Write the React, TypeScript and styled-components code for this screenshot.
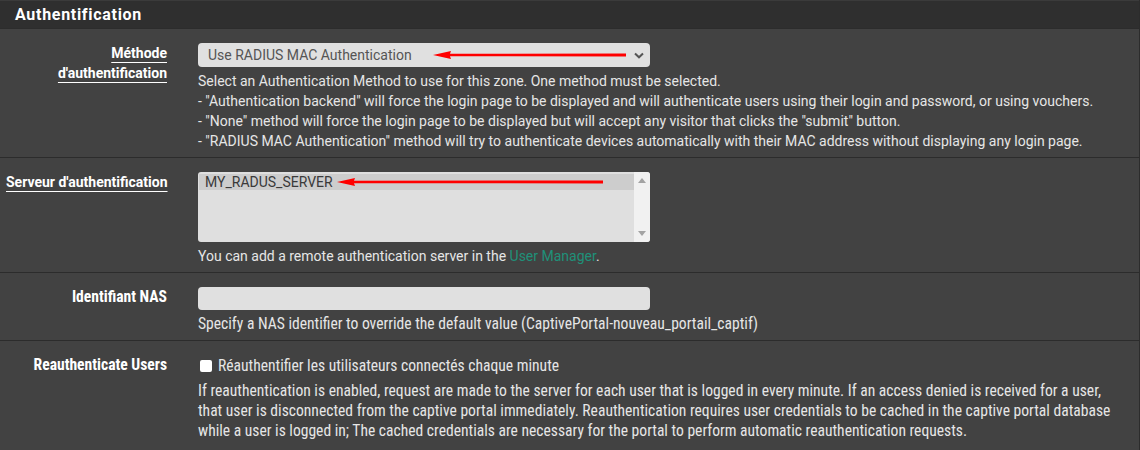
import React from 'react';
import styled, { createGlobalStyle } from 'styled-components';

const GlobalStyle = createGlobalStyle`
  html, body {
    margin: 0;
    padding: 0;
    background: #424242;
  }
  body {
    font-family: Roboto, "Liberation Sans", Arial, sans-serif;
    font-size: 14px;
    color: #e6e6e6;
  }
`;

const condensedFont = `"Roboto Condensed", "Liberation Sans Narrow", "DejaVu Sans Condensed", Roboto, sans-serif`;

const Panel = styled.div`
  width: 1139px;
  height: 450px;
  overflow: hidden;
  background: #424242;
  border-right: 1px solid #2c2c2c;
`;

const PanelHeading = styled.div`
  height: 28px;
  box-sizing: border-box;
  background: #2f2f2f;
  border-top: 1px solid #3b3b3b;
  display: flex;
  align-items: center;
  padding-left: 15px;
`;

const PanelTitle = styled.h2`
  margin: 0;
  font-size: 16px;
  font-weight: 700;
  letter-spacing: 0.7px;
  color: #ffffff;
`;

const Row = styled.div<{ condensed?: boolean }>`
  display: grid;
  grid-template-columns: 182px 1fr;
  border-top: 1px solid #2c2c2c;
  font-family: ${(p) => (p.condensed ? condensedFont : 'inherit')};
  font-stretch: ${(p) => (p.condensed ? 'condensed' : 'normal')};
  font-size: ${(p) => (p.condensed ? '15.6px' : '14px')};
`;

const Label = styled.div<{ left?: boolean }>`
  padding: 14px ${(p) => (p.left ? '0' : '15px')} 0 ${(p) => (p.left ? '6px' : '0')};
  text-align: ${(p) => (p.left ? 'left' : 'right')};
  font-weight: 700;
  line-height: 20px;
  color: #ffffff;
`;

const Required = styled.span`
  text-decoration: underline;
  text-decoration-thickness: 1px;
  text-underline-offset: 4px;
`;

const Value = styled.div`
  padding: 14px 15px 6px 16px;
  line-height: 20px;
`;

const Annotated = styled.div`
  position: relative;
  width: 452px;
`;

const SelectBox = styled.div`
  height: 24px;
  box-sizing: border-box;
  background: #e0e0e0;
  border-radius: 4px;
  display: flex;
  align-items: center;
  justify-content: space-between;
  padding: 0 6px 0 10px;
  color: #555555;
  font-size: 14px;
`;

const ListBox = styled.div`
  height: 70px;
  box-sizing: border-box;
  background: #dfdfdf;
  border-radius: 3px;
  display: flex;
  padding: 2px 2px 2px 1px;
`;

const Options = styled.div`
  flex: 1;
`;

const Option = styled.div<{ selected?: boolean }>`
  height: 16px;
  line-height: 16px;
  padding-left: 6px;
  color: #3a3a3a;
  background: ${(p) => (p.selected ? '#cdcdcd' : 'transparent')};
`;

const ScrollTrack = styled.div`
  width: 16px;
  background: #f1f1f1;
  display: flex;
  flex-direction: column;
  justify-content: space-between;
  align-items: center;
  padding: 6px 0;
  margin: -2px -2px -2px 0;
  border-radius: 0 3px 3px 0;
`;

const TextInput = styled.div`
  width: 452px;
  height: 23px;
  background: #e0e0e0;
  border-radius: 4px;
`;

const Help = styled.div<{ gap?: number }>`
  margin-top: ${(p) => p.gap ?? 4}px;
  color: #e6e6e6;
`;

const Line = styled.div`
  white-space: nowrap;
`;

const Link = styled.a`
  color: #1f9079;
  text-decoration: none;
`;

const CheckLine = styled.label`
  display: flex;
  align-items: center;
  gap: 6px;
  height: 20px;
  margin-top: 1px;
  padding-left: 2px;
`;

const CheckBox = styled.span`
  width: 12px;
  height: 12px;
  background: #ffffff;
  border-radius: 2px;
`;

const ArrowMark = styled.svg<{ left: number; top: number }>`
  position: absolute;
  left: ${(p) => p.left}px;
  top: ${(p) => p.top}px;
  pointer-events: none;
`;

const RedArrow: React.FC<{ left: number; top: number; length: number }> = ({ left, top, length }) => (
  <ArrowMark left={left} top={top} width={length} height={10} viewBox={`0 0 ${length} 10`}>
    <polygon points={`0,5 18,1 17,3.8 ${length},3.4 ${length},6.4 17,6.2 18,9`} fill="#ff0000" />
  </ArrowMark>
);

const Chevron = () => (
  <svg width="10" height="7" viewBox="0 0 10 7">
    <path d="M1 1.5 L5 5.3 L9 1.5" fill="none" stroke="#555" strokeWidth="2" />
  </svg>
);

const Tri: React.FC<{ up?: boolean }> = ({ up }) => (
  <svg width="8" height="5" viewBox="0 0 8 5">
    <polygon points={up ? '0,5 4,0 8,5' : '0,0 8,0 4,5'} fill="#a3a3a3" />
  </svg>
);

export default function App() {
  return (
    <>
      <GlobalStyle />
      <Panel>
        <PanelHeading>
          <PanelTitle>Authentification</PanelTitle>
        </PanelHeading>

        <Row>
          <Label>
            <Required>Méthode</Required>
            <br />
            <Required>d'authentification</Required>
          </Label>
          <Value>
            <Annotated>
              <SelectBox>
                <span>Use RADIUS MAC Authentication</span>
                <Chevron />
              </SelectBox>
              <RedArrow left={235} top={7} length={193} />
            </Annotated>
            <Help>
              <Line>Select an Authentication Method to use for this zone. One method must be selected.</Line>
              <Line>- "Authentication backend" will force the login page to be displayed and will authenticate users using their login and password, or using vouchers.</Line>
              <Line>- "None" method will force the login page to be displayed but will accept any visitor that clicks the "submit" button.</Line>
              <Line>- "RADIUS MAC Authentication" method will try to authenticate devices automatically with their MAC address without displaying any login page.</Line>
            </Help>
          </Value>
        </Row>

        <Row>
          <Label left>
            <Required>Serveur d'authentification</Required>
          </Label>
          <Value>
            <Annotated>
              <ListBox>
                <Options>
                  <Option selected>MY_RADUS_SERVER</Option>
                </Options>
                <ScrollTrack>
                  <Tri up />
                  <Tri />
                </ScrollTrack>
              </ListBox>
              <RedArrow left={139} top={5} length={266} />
            </Annotated>
            <Help>
              You can add a remote authentication server in the <Link href="#">User Manager</Link>.
            </Help>
          </Value>
        </Row>

        <Row condensed>
          <Label>Identifiant NAS</Label>
          <Value>
            <TextInput />
            <Help>Specify a NAS identifier to override the default value (CaptivePortal-nouveau_portail_captif)</Help>
          </Value>
        </Row>

        <Row condensed>
          <Label>Reauthenticate Users</Label>
          <Value>
            <CheckLine>
              <CheckBox />
              Réauthentifier les utilisateurs connectés chaque minute
            </CheckLine>
            <Help gap={5}>
              <Line>If reauthentication is enabled, request are made to the server for each user that is logged in every minute. If an access denied is received for a user,</Line>
              <Line>that user is disconnected from the captive portal immediately. Reauthentication requires user credentials to be cached in the captive portal database</Line>
              <Line>while a user is logged in; The cached credentials are necessary for the portal to perform automatic reauthentication requests.</Line>
            </Help>
          </Value>
        </Row>
      </Panel>
    </>
  );
}
